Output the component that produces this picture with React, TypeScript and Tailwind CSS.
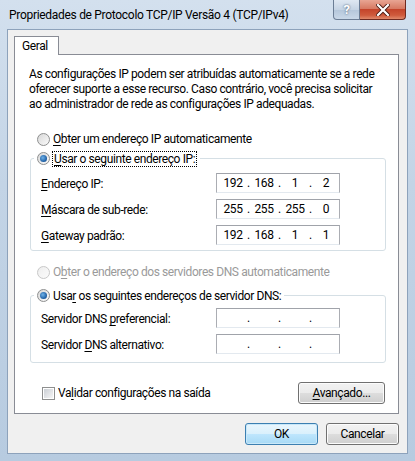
import React from "react";

const font = { fontFamily: 'Roboto, "Noto Sans", Arial, sans-serif' };

type RadioProps = { checked?: boolean; disabled?: boolean };

const Radio = ({ checked, disabled }: RadioProps) => (
  <span
    className={`flex items-center justify-center w-[13px] h-[13px] rounded-full border shrink-0 ${
      disabled
        ? "border-[#c8c8c8] bg-gradient-to-br from-[#eeeeee] to-[#fbfbfb]"
        : "border-[#8e8f8f] bg-gradient-to-br from-[#d8d8d8] to-[#fafafa]"
    }`}
  >
    {checked && (
      <span className="w-[7px] h-[7px] rounded-full bg-[radial-gradient(circle_at_40%_40%,#6fb2e8,#1a5aa0_70%,#0d3d73)]" />
    )}
  </span>
);

const Checkbox = () => (
  <span className="flex items-center justify-center w-[13px] h-[13px] border border-[#8e8f8f] bg-white shrink-0">
    <span className="w-[9px] h-[9px] bg-gradient-to-br from-[#cbcfd5] to-[#f6f6f6]" />
  </span>
);

type IpProps = { parts?: string[] };

const IpBox = ({ parts = ["", "", "", ""] }: IpProps) => (
  <div className="flex items-center w-[124px] h-[20px] bg-white border border-[#abadb3] border-t-[#a0a3aa] border-b-[#e3e9ef] pl-[4px] leading-none">
    {parts.map((p, i) => (
      <React.Fragment key={i}>
        <span className="w-[24px] text-center">{p}</span>
        {i < 3 && <span className="w-[7px] text-center">.</span>}
      </React.Fragment>
    ))}
  </div>
);

const Row = ({ label, parts }: { label: React.ReactNode; parts?: string[] }) => (
  <div className="flex items-center h-[20px]">
    <span className="w-[175px] pt-[2px]">{label}</span>
    <IpBox parts={parts} />
  </div>
);

const WinButton = ({
  children,
  wide,
  primary,
}: {
  children: React.ReactNode;
  wide?: boolean;
  primary?: boolean;
}) => (
  <div
    className={`flex items-center justify-center h-[22px] rounded-[3px] border ${
      wide ? "w-[87px]" : "w-[73px]"
    } ${
      primary
        ? "border-[#3c7fb1] bg-[linear-gradient(#eaf6fd,#d9f0fc_50%,#bee6fd_51%,#a7d9f5)] shadow-[inset_0_0_0_1px_#c9e8f9]"
        : "border-[#707070] bg-[linear-gradient(#f2f2f2,#ebebeb_50%,#dddddd_51%,#cfcfcf)] shadow-[inset_0_0_0_1px_#fcfcfc]"
    }`}
  >
    {children}
  </div>
);

const U = ({ children }: { children: React.ReactNode }) => (
  <span className="underline underline-offset-2">{children}</span>
);

export default function App() {
  return (
    <div
      className="w-[415px] h-[461px] flex flex-col overflow-hidden bg-[linear-gradient(180deg,#d3e0ee,#c3d4e6_40%,#b7cbe0)] text-[12px] tracking-[-0.4px] text-black"
      style={font}
    >
      {/* title bar */}
      <div className="flex h-[29px] shrink-0">
        <div className="pl-[9px] pt-[6px] text-[12px] leading-[18px] tracking-[-0.3px] text-black">
          Propriedades de Protocolo TCP/IP Versão 4 (TCP/IPv4)
        </div>
        <div className="ml-auto mr-[9px] flex h-[20px]">
          <div className="flex items-center justify-center w-[27px] h-[20px] rounded-bl-[4px] border border-t-0 border-[#6b7d95] bg-[linear-gradient(#dfe8f2,#c6d4e4_50%,#b4c6da_51%,#c9d8e8)] text-[13px] font-bold text-white [text-shadow:0_0_2px_#33465e]">
            ?
          </div>
          <div className="flex items-center justify-center w-[46px] h-[20px] rounded-br-[4px] border border-t-0 border-l-0 border-[#6e2a20] bg-[linear-gradient(#e8a593,#d77a63_45%,#c4452b_50%,#cf5a3c_80%,#e08a6c)]">
            <svg width="14" height="12" viewBox="0 0 14 12">
              <path
                d="M2 1 L12 11 M12 1 L2 11"
                stroke="#4a1a12"
                strokeWidth="4"
                strokeLinecap="square"
              />
              <path
                d="M2 1 L12 11 M12 1 L2 11"
                stroke="#ffffff"
                strokeWidth="2.2"
                strokeLinecap="square"
              />
            </svg>
          </div>
        </div>
      </div>

      {/* client area */}
      <div className="ml-[7px] w-[401px] h-[425px] bg-[#f0f0f0] border border-[#8da2bb] flex flex-col">
        {/* tabs */}
        <div className="ml-[6px] mt-[6px] flex">
          <div className="w-[45px] h-[19px] bg-white border border-b-0 border-[#898c95] pl-[7px] pt-[1px] leading-[16px] relative z-10 -mb-[1px]">
            Geral
          </div>
        </div>
        <div className="ml-[6px] w-[385px] h-[360px] bg-white border border-[#898c95] flex flex-col">
          <p className="pl-[14px] pt-[12px] leading-[15px] whitespace-nowrap">
            As configurações IP podem ser atribuídas automaticamente se a rede
            <br />
            oferecer suporte a esse recurso. Caso contrário, você precisa solicitar
            <br />
            ao administrador de rede as configurações IP adequadas.
          </p>

          <div className="mt-[19px] ml-[22px] flex items-center gap-[3px] h-[16px]">
            <Radio />
            <span>
              <U>O</U>bter um endereço IP automaticamente
            </span>
          </div>

          <fieldset className="mt-[3px] ml-[15px] w-[356px] border border-[#d5dfe5] rounded-[3px] pb-[5px]">
            <legend className="ml-[3px] px-[3px]">
              <span className="flex items-center gap-[2px] h-[17px]">
                <Radio checked />
                <span className="border border-dotted border-black px-[1px] leading-[14px]">
                  <U>U</U>sar o seguinte endereço IP:
                </span>
              </span>
            </legend>
            <div className="pl-[10px] pt-[6px] flex flex-col gap-[6px]">
              <Row label={<><U>E</U>ndereço IP:</>} parts={["192", "168", "1", "2"]} />
              <Row label={<><U>M</U>áscara de sub-rede:</>} parts={["255", "255", "255", "0"]} />
              <Row label={<><U>G</U>ateway padrão:</>} parts={["192", "168", "1", "1"]} />
            </div>
          </fieldset>

          <div className="mt-[13px] ml-[22px] flex items-center gap-[3px] h-[16px] text-[#9a9a9a]">
            <Radio disabled />
            <span>
              O<U>b</U>ter o endereço dos servidores DNS automaticamente
            </span>
          </div>

          <fieldset className="mt-[7px] ml-[15px] w-[356px] border border-[#d5dfe5] rounded-[3px] pb-[8px]">
            <legend className="ml-[3px] px-[3px]">
              <span className="flex items-center gap-[3px] h-[17px]">
                <Radio checked />
                <span>
                  Usa<U>r</U> os seguintes endereços de servidor DNS:
                </span>
              </span>
            </legend>
            <div className="pl-[10px] pt-[4px] flex flex-col gap-[6px]">
              <Row label={<>Servidor DNS <U>p</U>referencial:</>} />
              <Row label={<>Servidor <U>D</U>NS alternativo:</>} />
            </div>
          </fieldset>

          <div className="mt-[19px] ml-[27px] mr-[13px] flex items-center">
            <Checkbox />
            <span className="ml-[3px]">
              Va<U>l</U>idar configurações na saída
            </span>
            <div className="ml-auto">
              <WinButton wide>
                <span>
                  <U>A</U>vançado...
                </span>
              </WinButton>
            </div>
          </div>
        </div>

        <div className="mt-[9px] ml-[237px] flex gap-[8px]">
          <WinButton primary>OK</WinButton>
          <WinButton>Cancelar</WinButton>
        </div>
      </div>
    </div>
  );
}
